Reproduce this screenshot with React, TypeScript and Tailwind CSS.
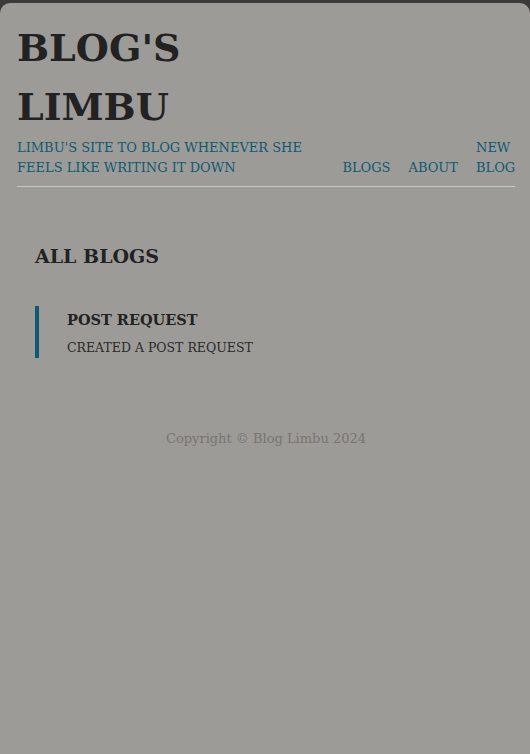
import React from 'react'

const serif = { fontFamily: '"DejaVu Serif", "Liberation Serif", serif' }

export default function App() {
  return (
    <div className="min-h-[754px] bg-[#3a3a3a] pt-[3px]" style={serif}>
      <div className="min-h-[751px] rounded-t-[10px] bg-[#9d9b97] pl-[17px] pr-[15px] pt-[15px]">
        <header className="flex items-end justify-between border-b border-[#c9c8c5] pb-[8px]">
          <div className="w-[290px]">
            <h1 className="max-w-[200px] text-[38px] font-bold leading-[59px] text-[#222]">
              BLOG'S LIMBU
            </h1>
            <p className="mt-[2px] text-[13px] leading-[20px] text-[#0d5a72]">
              LIMBU'S SITE TO BLOG WHENEVER SHE FEELS LIKE WRITING IT DOWN
            </p>
          </div>
          <nav className="flex items-end gap-[18px] text-[13px] leading-[20px] text-[#0d5a72]">
            <a>BLOGS</a>
            <a>ABOUT</a>
            <a className="w-[39px]">NEW BLOG</a>
          </nav>
        </header>

        <main className="px-[18px] pt-[55px]">
          <h2 className="text-[19px] font-bold leading-[28px] text-[#222]">ALL BLOGS</h2>
          <div className="mt-[36px] border-l-[4px] border-[#0d5a72] pl-[28px] pt-[2px] pb-[1px]">
            <h3 className="text-[14.5px] font-bold leading-[24px] text-[#222]">POST REQUEST</h3>
            <p className="mt-[7px] text-[12.5px] leading-[18px] text-[#2a2a2a]">CREATED A POST REQUEST</p>
          </div>
        </main>

        <footer className="pt-[71px] text-center text-[13px] leading-[20px] text-[#777572]">
          Copyright © Blog Limbu 2024
        </footer>
      </div>
    </div>
  )
}
